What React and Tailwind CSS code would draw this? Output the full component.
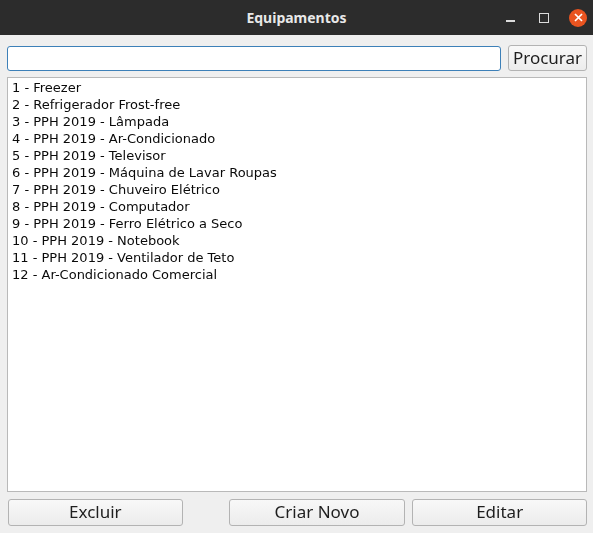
import React, { useState } from "react";

const items = [
  "1 - Freezer",
  "2 - Refrigerador Frost-free",
  "3 - PPH 2019 - Lâmpada",
  "4 - PPH 2019 - Ar-Condicionado",
  "5 - PPH 2019 - Televisor",
  "6 - PPH 2019 - Máquina de Lavar Roupas",
  "7 - PPH 2019 - Chuveiro Elétrico",
  "8 - PPH 2019 - Computador",
  "9 - PPH 2019 - Ferro Elétrico a Seco",
  "10 - PPH 2019 - Notebook",
  "11 - PPH 2019 - Ventilador de Teto",
  "12 - Ar-Condicionado Comercial",
];

function Button({ className = "", children }) {
  return (
    <button
      className={
        "h-full pb-[2px] rounded-[3px] border border-[#b3b3b3] bg-gradient-to-b from-[#f8f8f8] to-[#ececec] text-[17px] text-[#1e1e1e] leading-none " +
        className
      }
    >
      {children}
    </button>
  );
}

export default function App() {
  const [query, setQuery] = useState("");

  return (
    <div
      className="w-[593px] h-[533px] flex flex-col bg-[#efefef] overflow-hidden"
      style={{ fontFamily: '"Noto Sans", "DejaVu Sans", sans-serif' }}
    >
      {/* TITLE BAR */}
      <div className="h-[35px] bg-[#2c2c2c] relative flex items-center justify-center shrink-0">
        <span className="text-[14px] font-bold text-[#e8e8e8]">
          Equipamentos
        </span>
        <div className="absolute right-[6px] top-0 h-full flex items-center">
          <div className="w-[9px] h-[2px] bg-[#dcdcdc] mt-[7px] mr-[24px]" />
          <div className="w-[10px] h-[10px] border-[1.5px] border-[#dcdcdc] mr-[20px]" />
          <div className="w-[18px] h-[18px] rounded-full bg-[#e95420] flex items-center justify-center">
            <svg width="9" height="9" viewBox="0 0 9 9">
              <path d="M1 1 L8 8 M8 1 L1 8" stroke="#fff" strokeWidth="1.7" />
            </svg>
          </div>
        </div>
      </div>

      {/* CONTENT */}
      <div className="flex-1 flex flex-col pl-[7px] pr-[6px] pt-[10px] pb-[7px]">
        <div className="h-[26px] flex items-center gap-[7px]">
          <input
            type="text"
            value={query}
            autoFocus
            onChange={(e) => setQuery(e.target.value)}
            className="flex-1 h-[25px] bg-white border border-[#3d80b8] rounded-[3px] px-[2px] outline-none text-[13px]"
          />
          <Button className="w-[79px]">Procurar</Button>
        </div>

        {/* LIST */}
        <div
          className="mt-[6px] flex-1 bg-white border border-[#b9b9b9] pt-[1px] pl-[4px]"
          style={{ fontFamily: '"DejaVu Sans", sans-serif' }}
        >
          {items.map((item) => (
            <div key={item} className="h-[17px] text-[13px] leading-[17px] text-[#0a0a0a]">
              {item}
            </div>
          ))}
        </div>

        {/* BUTTONS */}
        <div className="mt-[7px] h-[27px] flex pl-[1px]">
          <Button className="w-[175px]">Excluir</Button>
          <Button className="w-[177px] ml-[46px]">Criar Novo</Button>
          <Button className="w-[175px] ml-[7px]">Editar</Button>
        </div>
      </div>
    </div>
  );
}
